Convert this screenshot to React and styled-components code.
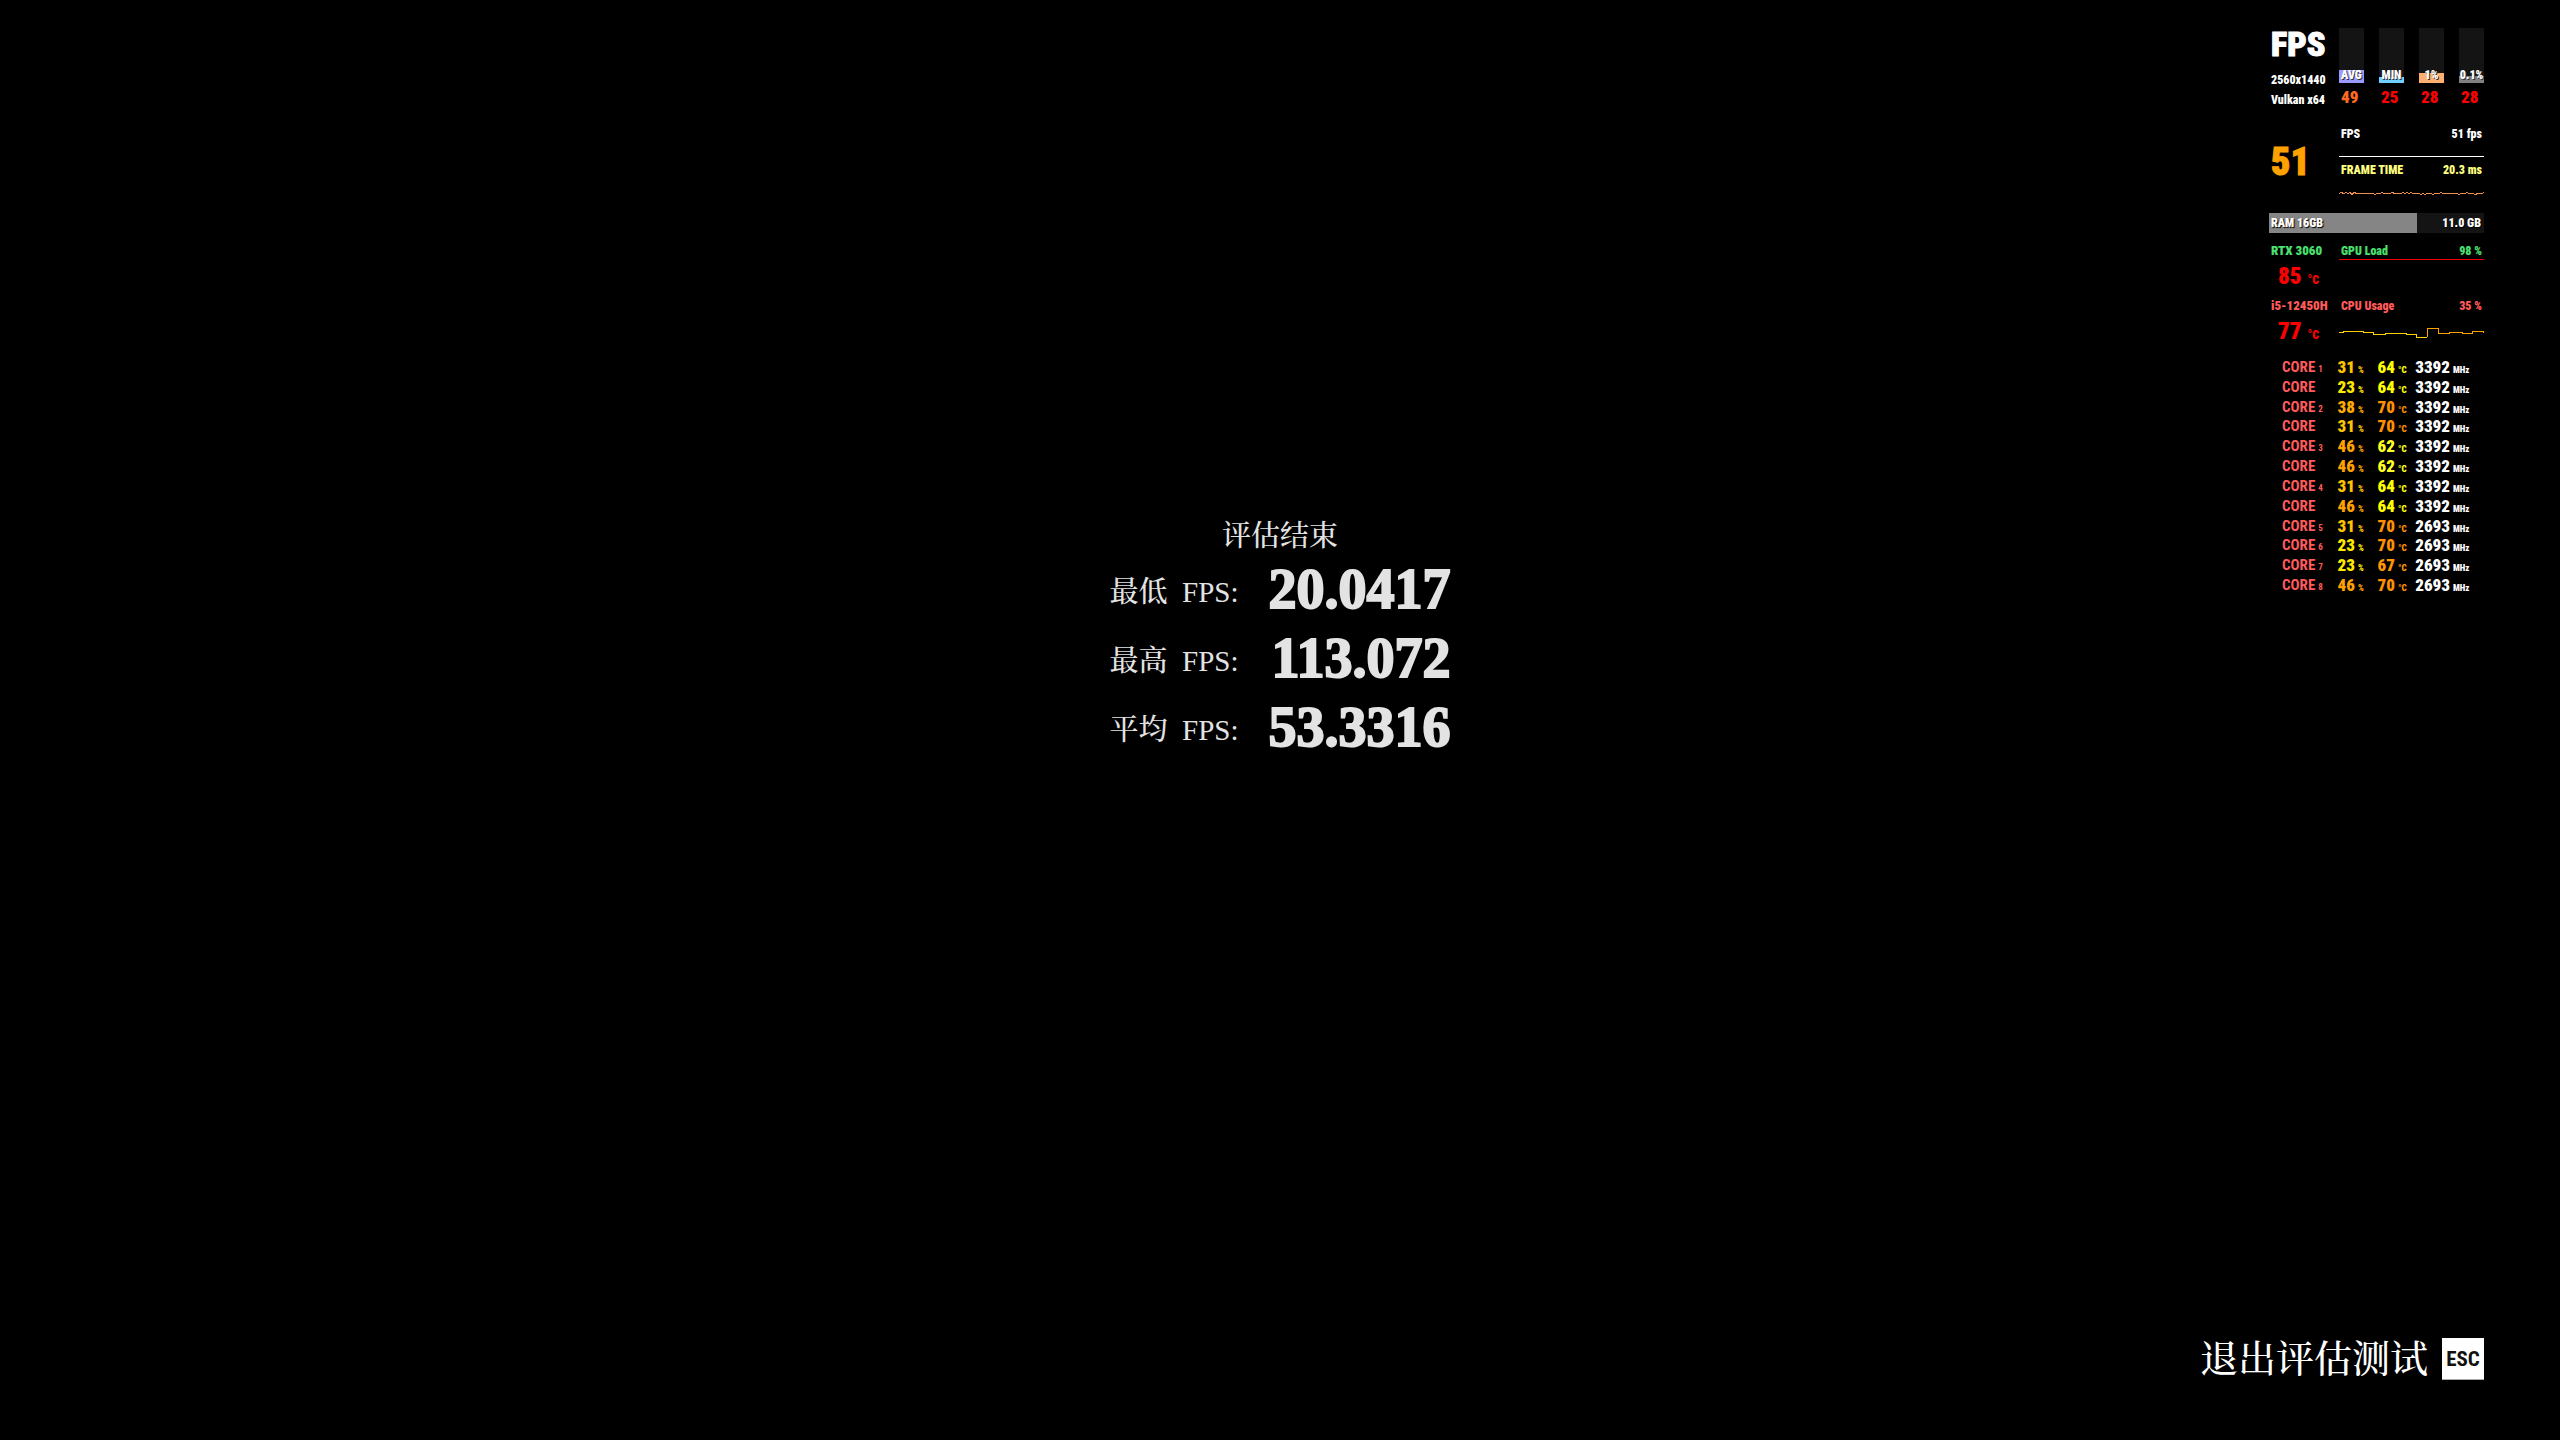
import React from "react";
import styled, {createGlobalStyle} from "styled-components";

const GlobalStyle=createGlobalStyle`
    *{
        box-sizing:border-box;
    }
    body{
        margin:0;
        background:#000;
        color:#fff;
    }
`;

const SERIF='"Liberation Serif","Noto Serif CJK SC","Noto Sans CJK SC",serif';
const NARROW='Impact,"Roboto Condensed","Liberation Sans Narrow","Liberation Sans",sans-serif';

const Screen=styled.main`
    display:grid;
    grid-template-columns:1fr auto 1fr;
    grid-template-rows:1fr auto;
    min-height:100vh;
    padding:28px 76px 60px;
    background:#000;
`;

/* results */
const Results=styled.section`
    grid-column:2;
    display:flex;
    flex-direction:column;
    align-items:center;
    padding-top:489px;
    font-family:${SERIF};
    color:#e3e3e3;
`;
const Heading=styled.h1`
    margin:0;
    font-size:29px;
    line-height:38px;
    font-weight:500;
`;
const ResultList=styled.dl`
    margin:0;
    display:grid;
    grid-template-columns:auto auto;
    column-gap:30px;
    grid-auto-rows:69px;
    align-items:center;
`;
const ResultLabel=styled.dt`
    font-size:29px;
    font-weight:500;
    white-space:pre;
`;
const ResultValue=styled.dd`
    margin:0;
    font-size:56px;
    line-height:69px;
    font-weight:700;
    text-align:right;
    -webkit-text-stroke:2px #e3e3e3;
`;

/* monitor overlay */
const Monitor=styled.aside`
    grid-column:3;
    justify-self:end;
    width:215px;
    font-family:${NARROW};
    font-weight:900;
    font-size:12px;
    line-height:16px;
    white-space:nowrap;
`;
const Block=styled.div`
    display:grid;
    grid-template-columns:70px 1fr;
    margin-bottom:${props=>props.$space}px;
`;
const Side=styled.div`
    display:flex;
    flex-direction:column;
    align-items:flex-start;
    padding-left:2px;
`;
const Logo=styled.div`
    font-size:34px;
    line-height:32px;
    margin-bottom:10px;
    -webkit-text-stroke:1px #fff;
`;
const Info=styled.div`
    line-height:20px;
`;
const Gauges=styled.div`
    display:flex;
    justify-content:space-between;
`;
const GaugeItem=styled.div`
    width:25px;
    display:flex;
    flex-direction:column;
    gap:4px;
`;
const GaugeTrack=styled.div`
    position:relative;
    height:55px;
    display:flex;
    align-items:flex-end;
    background:#141414;
`;
const GaugeFill=styled.div`
    width:100%;
    height:${props=>props.$level}px;
    background:${props=>props.$color};
`;
const GaugeLabel=styled.span`
    position:absolute;
    left:0;
    right:0;
    bottom:0;
    display:flex;
    justify-content:center;
    text-shadow:1px 1px 0 #333;
`;
const GaugeValue=styled.span`
    padding-left:2px;
    font-size:17px;
    line-height:20px;
    color:${props=>props.$color};
`;
const BigFps=styled.div`
    margin:auto 0;
    font-size:38px;
    line-height:40px;
    color:#ffa200;
    -webkit-text-stroke:1px #ffa200;
`;
const Line=styled.div`
    display:flex;
    justify-content:space-between;
    padding:0 2px;
    color:${props=>props.$color};
`;
const Graph=styled.svg`
    display:block;
    width:100%;
    height:${props=>props.$height}px;
    fill:none;
    stroke:${props=>props.$color};
    shape-rendering:crispEdges;
`;
const Memory=styled.div`
    display:flex;
    justify-content:space-between;
    padding:0 3px 0 2px;
    margin-bottom:10px;
    line-height:20px;
    text-shadow:1px 1px 1px #000;
    background:linear-gradient(to right,#858585 69%,#141414 69%);
`;
const Device=styled.div`
    font-size:13px;
    margin-bottom:7px;
    color:${props=>props.$color};
`;
const Temp=styled.div`
    display:flex;
    align-items:baseline;
    gap:6px;
    height:22px;
    padding-left:7px;
    font-size:23px;
    line-height:22px;
    color:#f00;
`;
const Degree=styled.span`
    font-size:12px;
    line-height:12px;
`;
const Cores=styled.table`
    height:238px;
    border-collapse:collapse;
    line-height:16px;
`;
const Core=styled.th`
    width:57px;
    padding:0 0 0 13px;
    text-align:left;
    font-size:15px;
    color:#ff5b5b;
`;
const Cell=styled.td`
    width:${props=>props.$width}px;
    padding:0;
    font-size:17px;
    text-align:right;
    color:${props=>props.$color};
`;
const Unit=styled.span`
    display:inline-block;
    width:${props=>props.$width}px;
    margin-left:3px;
    font-size:9px;
    line-height:9px;
    text-align:left;
`;

/* footer */
const Footer=styled.footer`
    grid-column:1 / -1;
    display:flex;
    justify-content:flex-end;
`;
const ExitButton=styled.button`
    display:flex;
    align-items:center;
    gap:14px;
    padding:0;
    border:0;
    background:transparent;
    color:#fff;
    font-family:${SERIF};
    font-size:38px;
    font-weight:500;
    line-height:42px;
`;
const Key=styled.kbd`
    width:42px;
    height:42px;
    background:#fff;
    border-bottom:1px solid #aaa;
    color:#111;
    font-family:${NARROW};
    font-size:21px;
    font-weight:700;
    text-align:center;
`;

const results=[
    {label:"最低  FPS:",value:"20.0417"},
    {label:"最高  FPS:",value:"113.072"},
    {label:"平均  FPS:",value:"53.3316"},
];

const gauges=[
    {label:"AVG",value:49,level:13,color:"#9a9aff",text:"#ff6a20"},
    {label:"MIN",value:25,level:6,color:"#70d0ff",text:"#f00"},
    {label:"1%",value:28,level:10,color:"#ffb070",text:"#f00"},
    {label:"0.1%",value:28,level:7,color:"#808080",text:"#f00"},
];

const loadColors={23:"#ffe800",31:"#ffc400",38:"#ffab00",46:"#ffa200"};
const tempColors={62:"#ffff20",64:"#ffff00",67:"#ff9800",70:"#ff9000"};

const cores=[
    [1,31,64,3392],
    ["",23,64,3392],
    [2,38,70,3392],
    ["",31,70,3392],
    [3,46,62,3392],
    ["",46,62,3392],
    [4,31,64,3392],
    ["",46,64,3392],
    [5,31,70,2693],
    [6,23,70,2693],
    [7,23,67,2693],
    [8,46,70,2693],
];

const Gauge=({gauge})=>(
    <GaugeItem>
        <GaugeTrack>
            <GaugeFill $level={gauge.level} $color={gauge.color}/>
            <GaugeLabel>{gauge.label}</GaugeLabel>
        </GaugeTrack>
        <GaugeValue $color={gauge.text}>{gauge.value}</GaugeValue>
    </GaugeItem>
);

const App=()=>{
    return(
        <Screen>
            <GlobalStyle/>
            <Results>
                <Heading>评估结束</Heading>
                <ResultList>
                    {results.map(item=>(
                        <React.Fragment key={item.label}>
                            <ResultLabel>{item.label}</ResultLabel>
                            <ResultValue>{item.value}</ResultValue>
                        </React.Fragment>
                    ))}
                </ResultList>
            </Results>
            <Monitor>
                <Block $space={16}>
                    <Side>
                        <Logo>FPS</Logo>
                        <Info>2560x1440</Info>
                        <Info>Vulkan x64</Info>
                    </Side>
                    <Gauges>
                        {gauges.map(gauge=><Gauge key={gauge.label} gauge={gauge}/>)}
                    </Gauges>
                </Block>
                <Block $space={15}>
                    <Side>
                        <BigFps>51</BigFps>
                    </Side>
                    <div>
                        <Line $color="#fff"><span>FPS</span><span>51 fps</span></Line>
                        <Graph $height={20} $color="#fff" viewBox="0 0 145 20">
                            <path d="M0 14.5H145"/>
                        </Graph>
                        <Line $color="#ffff80"><span>FRAME TIME</span><span>20.3 ms</span></Line>
                        <Graph $height={20} $color="#f0904a" viewBox="0 0 145 20">
                            <path d="M0 15.5l2-1 3 1 2-1 2 1 2-1 2 2 2-2 3 1h16l2 1 2-1h3l2-1 2 1h6l2-1 3 1h6l2-1 2 1 2-1 2 1 2-1 2 1h6l2 1 2-1 2 1 2-1h4l2 1 2-1h4l2-1 2 1h14l2 1 2-1h4l2-1 2 1h4l2 1 3-1h4l2-1 2 1h6"/>
                        </Graph>
                    </div>
                </Block>
                <Memory><span>RAM 16GB</span><span>11.0 GB</span></Memory>
                <Block $space={10}>
                    <Side>
                        <Device $color="#4be070">RTX 3060</Device>
                        <Temp>85 <Degree>°C</Degree></Temp>
                    </Side>
                    <div>
                        <Line $color="#4be070"><span>GPU Load</span><span>98 %</span></Line>
                        <Graph $height={4} $color="#f00000" viewBox="0 0 145 4">
                            <path d="M0 .5H145"/>
                        </Graph>
                    </div>
                </Block>
                <Block $space={14}>
                    <Side>
                        <Device $color="#ff5b5b">i5-12450H</Device>
                        <Temp>77 <Degree>°C</Degree></Temp>
                    </Side>
                    <div>
                        <Line $color="#ff5b5b"><span>CPU Usage</span><span>35 %</span></Line>
                        <Graph $height={29} $color="#ffd000" viewBox="0 0 145 29">
                            <path d="M0 18.5h4v-1h20v1h10l1 2h11v-1h21v1h10l1 3h10"/>
                            <path stroke="#ffa200" d="M88 23.5l1-9h10l1 5h10v-1h13v1h10l1-2h10v1h1"/>
                        </Graph>
                    </div>
                </Block>
                <Cores>
                    <tbody>
                        {cores.map(([num,load,temp,clock],index)=>(
                            <tr key={index}>
                                <Core scope="row">CORE<Unit $width={4}>{num}</Unit></Core>
                                <Cell $width={42} $color={loadColors[load]}>{load}<Unit $width={10}>%</Unit></Cell>
                                <Cell $width={40} $color={tempColors[temp]}>{temp}<Unit $width={10}>°C</Unit></Cell>
                                <Cell $width={61} $color="#fff">{clock}<Unit $width={16}>MHz</Unit></Cell>
                            </tr>
                        ))}
                    </tbody>
                </Cores>
            </Monitor>
            <Footer>
                <ExitButton type="button">退出评估测试<Key>ESC</Key></ExitButton>
            </Footer>
        </Screen>
    )
}
export default App
